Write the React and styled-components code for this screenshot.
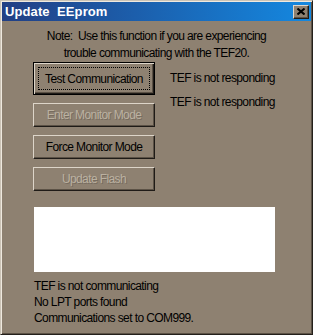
import React from 'react';
import styled, { createGlobalStyle } from 'styled-components';

const face = '#8e8171';

const GlobalStyle = createGlobalStyle`
    html, body {
        margin: 0;
        padding: 0;
        background: ${face};
    }
    * {
        box-sizing: border-box;
    }
`;

const Window = styled.div`
    width: 313px;
    height: 335px;
    padding: 1px;
    background: ${face};
    border: 1px solid;
    border-color: #cbc3b6 #24201b #24201b #cbc3b6;
    box-shadow: inset 1px 1px 0 #efe9df, inset -1px -1px 0 #5c5246;
    font-family: 'Liberation Sans', Arial, sans-serif;
    font-size: 12px;
    letter-spacing: -0.6px;
    color: #000;
    display: flex;
    flex-direction: column;
`;

const TitleBar = styled.div`
    height: 19px;
    display: flex;
    align-items: center;
    justify-content: space-between;
    padding: 0 2px 0 3px;
    background: linear-gradient(to right, #223f84, #1488e0);
`;

const TitleText = styled.span`
    color: #fff;
    font-weight: bold;
    font-size: 13px;
    letter-spacing: 0.1px;
    white-space: pre;
`;

const CloseButton = styled.div`
    width: 16px;
    height: 14px;
    background: ${face};
    border: 1px solid;
    border-color: #ded6ca #1f1b17 #1f1b17 #ded6ca;
    box-shadow: inset -1px -1px 0 #5c5246;
    display: flex;
    align-items: center;
    justify-content: center;
`;

const Body = styled.div`
    display: flex;
    flex-direction: column;
    padding: 7px 0 0 31px;
`;

const Note = styled.div`
    margin-left: -31px;
    text-align: center;
    line-height: 17px;
    white-space: pre;
`;

const Row = styled.div`
    display: flex;
`;

const ButtonColumn = styled.div`
    display: flex;
    flex-direction: column;
    gap: 8px;
`;

const Button = styled.div`
    width: 122px;
    height: ${({ $tall }) => ($tall ? 33 : 24)}px;
    background: ${face};
    border: 1px solid;
    border-color: ${({ $default }) => ($default ? '#000' : '#ddd5c9 #1f1b17 #1f1b17 #ddd5c9')};
    box-shadow: ${({ $default }) =>
        $default
            ? 'inset 1px 1px 0 #ddd5c9, inset -1px -1px 0 #1f1b17, inset -2px -2px 0 #5c5246'
            : 'inset -1px -1px 0 #5c5246'};
    display: flex;
    align-items: center;
    justify-content: center;
    padding: ${({ $default }) => ($default ? '4px' : '0')};
    color: ${({ $disabled }) => ($disabled ? '#bbb1a1' : '#000')};
    text-shadow: ${({ $disabled }) => ($disabled ? '1px 1px 0 #776c5f' : 'none')};
`;

const FocusRing = styled.div`
    flex: 1;
    align-self: stretch;
    display: flex;
    align-items: center;
    justify-content: center;
    border: 1px dotted #000;
`;

const LabelColumn = styled.div`
    display: flex;
    flex-direction: column;
    gap: 8px;
    padding: 8px 0 0 15px;
    line-height: 16px;
`;

const OutputBox = styled.div`
    width: 241px;
    height: 65px;
    margin: 16px 0 0 1px;
    background: #fff;
`;

const StatusList = styled.div`
    display: flex;
    flex-direction: column;
    margin: 6px 0 0 1px;
    line-height: 16px;
`;

const buttons = [
    { label: 'Test Communication', isDefault: true },
    { label: 'Enter Monitor Mode', disabled: true },
    { label: 'Force Monitor Mode' },
    { label: 'Update Flash', disabled: true },
];

const statusLines = ['TEF is not communicating', 'No LPT ports found', 'Communications set to COM999.'];

export default function App() {
    return (
        <>
            <GlobalStyle />
            <Window>
                <TitleBar>
                    <TitleText>{'Update  EEprom'}</TitleText>
                    <CloseButton>
                        <svg width="8" height="7" viewBox="0 0 8 7">
                            <path d="M0.5 0.5 L7.5 6.5 M7.5 0.5 L0.5 6.5" stroke="#000" strokeWidth="2" />
                        </svg>
                    </CloseButton>
                </TitleBar>
                <Body>
                    <Note>
                        {'Note:  Use this function if you are experiencing\ntrouble communicating with the TEF20.'}
                    </Note>
                    <Row>
                        <ButtonColumn>
                            {buttons.map(b => (
                                <Button key={b.label} $tall={b.isDefault} $default={b.isDefault} $disabled={b.disabled}>
                                    {b.isDefault ? <FocusRing>{b.label}</FocusRing> : b.label}
                                </Button>
                            ))}
                        </ButtonColumn>
                        <LabelColumn>
                            <span>TEF is not responding</span>
                            <span>TEF is not responding</span>
                        </LabelColumn>
                    </Row>
                    <OutputBox />
                    <StatusList>
                        {statusLines.map(line => (
                            <span key={line}>{line}</span>
                        ))}
                    </StatusList>
                </Body>
            </Window>
        </>
    );
}
